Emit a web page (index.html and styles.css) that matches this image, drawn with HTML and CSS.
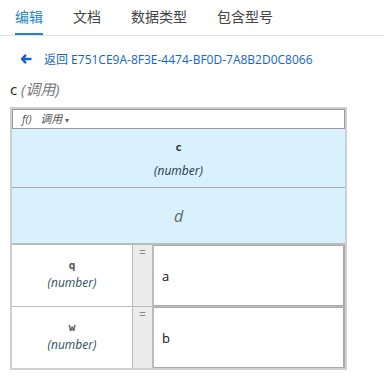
FILE: index.html
```html
<!DOCTYPE html>
<html>
<head>
<meta charset="utf-8">
<link rel="stylesheet" href="styles.css">
</head>
<body>
<nav class="tabs">
  <span class="tab active">编辑</span>
  <span class="tab">文档</span>
  <span class="tab">数据类型</span>
  <span class="tab">包含型号</span>
</nav>
<div class="back">
  <svg class="arrow" width="11" height="10" viewBox="0 0 11 10"><path d="M5 0.8 L1 5 L5 9.2 M1.2 5 H10.5" fill="none" stroke="#1565c0" stroke-width="2.4" stroke-linejoin="miter"/></svg>
  <span>返回 E751CE9A-8F3E-4474-BF0D-7A8B2D0C8066</span>
</div>
<div class="title">c <em>(调用)</em></div>
<div class="frame">
  <div class="head"><em>f()&nbsp;&nbsp; 调用</em> <span class="caret">▾</span></div>
  <div class="ret">
    <div class="name">c</div>
    <div class="type">(number)</div>
  </div>
  <div class="body"><em>d</em></div>
  <div class="row">
    <div class="param">
      <div class="name">q</div>
      <div class="type">(number)</div>
    </div>
    <div class="eq">=</div>
    <div class="val">a</div>
  </div>
  <div class="row">
    <div class="param">
      <div class="name">w</div>
      <div class="type">(number)</div>
    </div>
    <div class="eq">=</div>
    <div class="val">b</div>
  </div>
</div>
</body>
</html>
```
FILE: styles.css
```css
body {
  margin: 0;
  font-family: "Open Sans", "Noto Sans CJK SC", sans-serif;
  color: #333;
  background: #fff;
}
.tabs {
  display: flex;
  gap: 30px;
  padding: 0 0 0 15px;
  border-bottom: 1px solid #e3e3e3;
  height: 35px;
}
.tab {
  font-size: 14px;
  line-height: 33px;
  color: #444;
}
.tab.active {
  color: #1f85c6;
  border-bottom: 2px solid #1f85c6;
}
.back {
  display: flex;
  align-items: center;
  margin: 15px 0 0 21px;
  gap: 12px;
  font-size: 12px;
  color: #1565c0;
  height: 16px;
}
.title {
  margin: 12px 0 0 10px;
  font-size: 15px;
  line-height: 20px;
  color: #222;
  height: 20px;
}
.title em {
  color: #777;
}
.frame {
  margin: 8px 0 0 10px;
  width: 333px;
  background: #cfcfcf;
  padding: 2px;
  display: flex;
  flex-direction: column;
}
.head {
  background: #fff;
  border: 1px solid #999;
  height: 18px;
  font-size: 11px;
  line-height: 17px;
  color: #555;
  padding-left: 9px;
}
.caret {
  font-size: 8px;
  color: #666;
}
.ret {
  background: #d9f1fd;
  border-bottom: 1px solid #aaa;
  height: 58px;
  display: flex;
  flex-direction: column;
  align-items: center;
}
.name {
  font-family: "DejaVu Sans Mono", monospace;
  font-weight: bold;
  font-size: 11px;
  color: #555;
}
.ret .name {
  margin-top: 12px;
  color: #333;
}
.type {
  font-style: italic;
  font-size: 12px;
  color: #2b4f5e;
}
.ret .type {
  margin-top: 8px;
  color: #1b3a48;
}
.body {
  background: #d9f1fd;
  height: 55px;
  border-bottom: 2px solid #bbb;
  display: flex;
  align-items: center;
  justify-content: center;
  font-size: 16px;
  color: #666;
}
.row {
  display: flex;
  height: 61px;
  background: #fff;
}
.row + .row {
  border-top: 1px solid #bbb;
}
.param {
  width: 120px;
  border-right: 1px solid #bbb;
  display: flex;
  flex-direction: column;
  align-items: center;
  justify-content: center;
  gap: 2px;
}
.param .name {
  margin-top: -2px;
}
.eq {
  width: 19px;
  background: #ececec;
  border-right: 1px solid #bbb;
  text-align: center;
  font-size: 12px;
  line-height: 16px;
  color: #888;
}
.val {
  flex: 1;
  border: 1px solid #aaa;
  border-right-width: 2px;
  border-left: 1px solid #bbb;
  padding-left: 8px;
  display: flex;
  align-items: center;
  font-size: 13px;
  color: #111;
}
```
